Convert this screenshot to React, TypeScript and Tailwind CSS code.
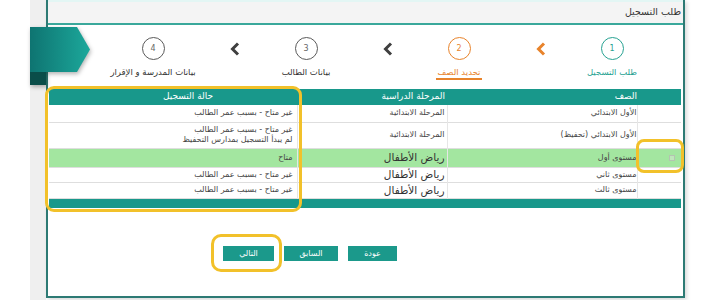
import React from 'react';

const STEPS = [
  { n: 1, label: 'طلب التسجيل', tone: 'done' },
  { n: 2, label: 'تحديد الصف', tone: 'active' },
  { n: 3, label: 'بيانات الطالب', tone: 'idle' },
  { n: 4, label: 'بيانات المدرسة و الإقرار', tone: 'idle' },
];

const ROWS = [
  { grade: 'الأول الابتدائي', stage: 'المرحلة الابتدائية', big: false, status: ['غير متاح - بسبب عمر الطالب'], h: 'h-[17px]', ok: false },
  { grade: 'الأول الابتدائي (تحفيظ)', stage: 'المرحلة الابتدائية', big: false, status: ['غير متاح - بسبب عمر الطالب', 'لم يبدأ التسجيل بمدارس التحفيظ'], h: 'h-[26px]', ok: false },
  { grade: 'مستوى أول', stage: 'رياض الأطفال', big: true, status: ['متاح'], h: 'h-[19px]', ok: true },
  { grade: 'مستوى ثاني', stage: 'رياض الأطفال', big: true, status: ['غير متاح - بسبب عمر الطالب'], h: 'h-[15px]', ok: false },
  { grade: 'مستوى ثالث', stage: 'رياض الأطفال', big: true, status: ['غير متاح - بسبب عمر الطالب'], h: 'h-[16px]', ok: false },
];

function Chevron({ orange }: { orange?: boolean }) {
  return (
    <svg width="10" height="14" viewBox="0 0 10 14">
      <polyline
        points="8,1.5 2.5,7 8,12.5"
        fill="none"
        stroke={orange ? '#e8832b' : '#3f3f3f'}
        strokeWidth="3"
      />
    </svg>
  );
}

function Step({ n, label, tone }: { n: number; label: string; tone: string }) {
  const ring =
    tone === 'done' ? 'border-[#27a292] text-[#27a292]' :
    tone === 'active' ? 'border-[#e8832b] text-[#e8832b]' :
    'border-[#5a5a5a] text-[#666]';
  const text =
    tone === 'done' ? 'text-[#27a292]' :
    tone === 'active' ? 'text-[#e8832b]' :
    'text-[#333]';
  return (
    <div className="w-[100px] flex flex-col items-center">
      <div className={`w-[23px] h-[23px] rounded-full border-[1.5px] flex items-center justify-center text-[8px] ${ring}`}>
        {n}
      </div>
      <div className={`mt-[6px] text-[8.5px] leading-[12px] whitespace-nowrap ${text}`}>{label}</div>
      {tone === 'active' && <div className="h-[2px] w-[46px] bg-[#e8832b]" />}
    </div>
  );
}

export default function App() {
  return (
    <div className="relative w-[720px] h-[300px] overflow-hidden bg-white flex font-['DejaVu_Sans',sans-serif]">
      <div className="w-[30px] shrink-0" />
      <div className="w-[16px] shrink-0 bg-[#efefef]" />

      {/* ── Panel ─────────────────────────────────────────────── */}
      <div
        dir="rtl"
        className="w-[639px] h-[298px] shrink-0 flex flex-col border-x-2 border-b-2 border-[#2d7a74] shadow-[2px_2px_4px_rgba(0,0,0,0.15)]"
      >
        <div className="h-[2px] bg-[#e3f6f4]" />
        <div className="h-[21px] bg-[#f4f4f4] flex items-center pr-[2px] text-[9.5px] text-[#333]">
          طلب التسجيل
        </div>
        <div className="h-[2px] bg-[#3aa89b]" />

        {/* Steps */}
        <div className="h-[64px] flex items-start pt-[12px] pr-[21px]">
          {STEPS.map((s, i) => (
            <React.Fragment key={s.n}>
              <Step {...s} />
              {i < STEPS.length - 1 && (
                <div className="w-[53px] flex justify-start pr-[16px] pt-[5px]">
                  <Chevron orange={i === 0} />
                </div>
              )}
            </React.Fragment>
          ))}
        </div>

        {/* Table */}
        <div className="pl-[1px] pr-[2px]">
          <table className="w-[632px] table-fixed border-collapse text-[8px] text-[#444]">
            <colgroup>
              <col className="w-[44px]" />
              <col className="w-[190px]" />
              <col className="w-[150px]" />
              <col className="w-[248px]" />
            </colgroup>
            <thead>
              <tr className="h-[16px] bg-[#18988b] text-white text-[9px]">
                <th />
                <th className="text-right font-normal pr-0">الصف</th>
                <th className="text-right font-normal pr-[2px]">المرحلة الدراسية</th>
                <th className="text-center font-normal pl-[30px]">حالة التسجيل</th>
              </tr>
            </thead>
            <tbody>
              {ROWS.map(r => (
                <tr key={r.grade} className={`${r.h} border-b border-[#dedede] ${r.ok ? 'bg-[#a3e6a0]' : 'bg-white'}`}>
                  <td className="border-l border-[#e6e6e6] pr-[6px] align-middle">
                    {r.ok && <div className="w-[6px] h-[6px] border border-[#b3c4b1] bg-[#bfe6bb]" />}
                  </td>
                  <td className="border-l border-[#e6e6e6] text-right pr-0 leading-[10px]">{r.grade}</td>
                  <td className={`border-l border-[#e6e6e6] text-right pr-[2px] ${r.big ? 'text-[10.5px] text-[#333] leading-[13px]' : 'leading-[10px]'}`}>
                    {r.stage}
                  </td>
                  <td className="text-right pr-[4px] leading-[10px]">
                    {r.status.map(t => <div key={t}>{t}</div>)}
                  </td>
                </tr>
              ))}
              <tr className="h-[10px] bg-[#18988b]"><td colSpan={4} /></tr>
            </tbody>
          </table>
        </div>

        {/* Buttons */}
        <div className="mt-[38px] flex gap-[10px] pr-[286px]">
          {[['عودة', 'w-[49px]'], ['السابق', 'w-[54px]'], ['التالي', 'w-[51px]']].map(([t, w]) => (
            <div key={t} className={`${w} h-[15px] bg-[#1b998b] text-white text-[8px] flex items-center justify-center`}>
              {t}
            </div>
          ))}
        </div>
      </div>

      {/* ── Ribbon ─────────────────────────────────────────────── */}
      <svg className="absolute left-[30px] top-[27px] drop-shadow-[1px_2px_2px_rgba(0,0,0,0.3)]" width="62" height="59" viewBox="0 0 62 59">
        <defs>
          <linearGradient id="rib" x1="0" x2="1" y1="0" y2="0">
            <stop offset="0" stopColor="#0e7471" />
            <stop offset="1" stopColor="#1ca89b" />
          </linearGradient>
        </defs>
        <rect x="0" y="45" width="16" height="13" fill="#0a4d49" />
        <polygon points="0,0 47,0 60,22.5 47,45 0,45" fill="url(#rib)" />
      </svg>

      {/* ── Highlights ─────────────────────────────────────────── */}
      <div className="absolute left-[45px] top-[86px] w-[257px] h-[126px] border-[3px] border-[#f2c12a] rounded-[9px]" />
      <div className="absolute left-[636px] top-[139px] w-[48px] h-[34px] border-[3px] border-[#f2c12a] rounded-[8px]" />
      <div className="absolute left-[211px] top-[234px] w-[71px] h-[38px] border-[3px] border-[#f2c12a] rounded-[10px]" />
    </div>
  );
}
